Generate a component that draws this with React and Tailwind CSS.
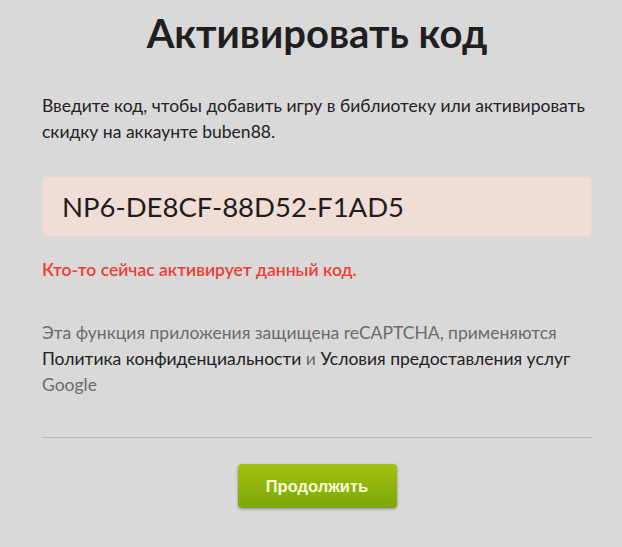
import React from "react";

function App() {
  return (
    <div className="min-h-screen bg-[#d9d9d9] pl-[42px] pr-[30px] pt-[8px] font-['Lato',sans-serif]">
      <h1 className="text-center text-[40px] font-bold leading-[50px] text-[#1f1f1f]">
        Активировать код
      </h1>

      <p className="mt-[35px] text-[17.5px] leading-[26px] text-[#222]">
        Введите код, чтобы добавить игру в библиотеку или активировать скидку
        на аккаунте buben88.
      </p>

      <div className="mt-[31px] flex h-[61px] items-center rounded-[5px] border border-[#e8d6cf] bg-[#f0ddd5] px-[19px] text-[27.5px] text-[#1e1e1e]">
        NP6-DE8CF-88D52-F1AD5
      </div>

      <div className="mt-[20px] text-[17.5px] font-semibold text-[#ee3d33]">
        Кто-то сейчас активирует данный код.
      </div>

      <p className="mt-[37px] text-[17.5px] leading-[26px] text-[#6b6b6b]">
        Эта функция приложения защищена reCAPTCHA, применяются{" "}
        <a className="text-[#222]">Политика конфиденциальности</a> и{" "}
        <a className="text-[#222]">Условия предоставления услуг</a> Google
      </p>

      <div className="mt-[39px] border-t border-[#b9b9b9]"></div>

      <div className="mt-[26px] flex justify-center">
        <button className="h-[44px] w-[159px] rounded-[4px] bg-gradient-to-b from-[#a3c10e] to-[#7ca70a] font-['Liberation_Sans',sans-serif] text-[16.5px] font-bold text-[#f6fbd6] shadow-[0_1px_3px_rgba(0,0,0,0.35)]">
          Продолжить
        </button>
      </div>
    </div>
  );
}

export default App;
